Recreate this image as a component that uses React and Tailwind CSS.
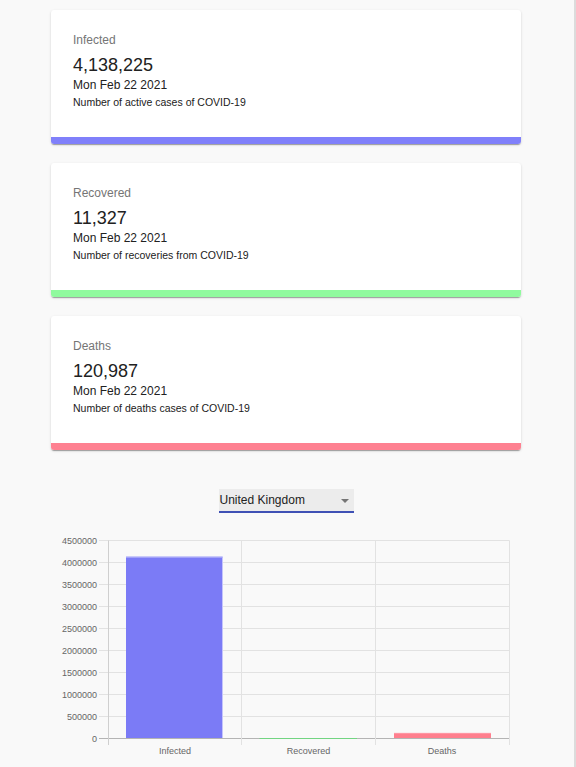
import React from "react";

const cards = [
  { title: "Infected", value: "4,138,225", desc: "Number of active cases of COVID-19", bar: "bg-[#8080fa]" },
  { title: "Recovered", value: "11,327", desc: "Number of recoveries from COVID-19", bar: "bg-[#90fa9e]" },
  { title: "Deaths", value: "120,987", desc: "Number of deaths cases of COVID-19", bar: "bg-[#fe8191]" },
];

function Card({ c }) {
  return (
    <div className="h-[134px] flex flex-col rounded-[3px] overflow-hidden bg-white shadow-[0_2px_1px_-1px_rgba(0,0,0,0.2),0_1px_1px_0_rgba(0,0,0,0.14),0_1px_3px_0_rgba(0,0,0,0.12)]">
      <div className="flex-1 pl-[22px] pt-[21px]">
        <div className="text-[12px] leading-[18px] text-[#757575] mb-[5px]">{c.title}</div>
        <div className="text-[18px] leading-[22px] text-[#212121]">{c.value}</div>
        <div className="text-[12px] leading-[18px] text-[#212121]">Mon Feb 22 2021</div>
        <div className="text-[10.5px] leading-[15px] mt-[1px] text-[#212121]">{c.desc}</div>
      </div>
      <div className={"h-[7px] " + c.bar} />
    </div>
  );
}

function Chart() {
  const ys = [738.5, 716.5, 694.5, 672.5, 650.5, 628.5, 606.5, 584.5, 562.5, 540.5];
  const labels = ["0", "500000", "1000000", "1500000", "2000000", "2500000", "3000000", "3500000", "4000000", "4500000"];
  const xs = [108.5, 241.5, 375.5, 509.5];
  const cats = [
    { name: "Infected", x: 175 },
    { name: "Recovered", x: 308.5 },
    { name: "Deaths", x: 442 },
  ];
  return (
    <svg width="480" height="239" viewBox="40 528 480 239" className="block" style={{ fontFamily: '"Liberation Sans", Arial, sans-serif' }}>
      {ys.map((y, i) => (
        <line key={"h" + i} x1={99} x2={509.5} y1={y} y2={y} stroke={i === 0 ? "#b4b4b4" : "#e2e2e2"} strokeWidth="1" />
      ))}
      {xs.map((x, i) => (
        <line key={"v" + i} x1={x} x2={x} y1={540.5} y2={745} stroke={i === 0 ? "#cfcfcf" : "#e2e2e2"} strokeWidth="1" />
      ))}
      {ys.map((y, i) => (
        <text key={"t" + i} x={97} y={y + 3} textAnchor="end" fontSize="9" fill="#666">{labels[i]}</text>
      ))}
      {cats.map((c) => (
        <text key={c.name} x={c.x} y={753.5} textAnchor="middle" fontSize="9" fill="#666">{c.name}</text>
      ))}
      <rect x="126" y="556.7" width="96.5" height="181.3" fill="#7b7bf6" />
      <line x1="222.5" x2="222.5" y1="557" y2="738" stroke="#c4c4fb" strokeWidth="1" />
      <line x1="126" x2="223" y1="557.2" y2="557.2" stroke="#b4b4fa" strokeWidth="1" />
      <line x1="259.5" x2="357" y1="738.5" y2="738.5" stroke="#72d582" strokeWidth="1" />
      <rect x="394" y="733" width="97" height="5" fill="#ff7f8e" />
      <line x1="394" x2="491" y1="733.3" y2="733.3" stroke="#ffa4ae" strokeWidth="0.8" />
    </svg>
  );
}

export default function App() {
  return (
    <div className="flex h-[767px] bg-[#f9f9f9] overflow-hidden" style={{ fontFamily: '"Liberation Sans", Arial, sans-serif' }}>
      <div className="w-[572px] flex flex-col">
        <div className="w-[470px] mx-auto mt-[10px] flex flex-col gap-[19px]">
          {cards.map((c) => (
            <Card key={c.title} c={c} />
          ))}
        </div>
        <div className="mt-[39px] mx-auto w-[135px] h-[24px] bg-[#ececec] border-b-[2px] border-[#3f51b5] flex items-center justify-between pl-[1px] pr-[5px]">
          <span className="text-[12px] leading-[14px] text-[#222]">United Kingdom</span>
          <svg width="8" height="4" viewBox="0 0 8 4" className="block mt-[1px]">
            <path d="M0 0L4 4L8 0Z" fill="#757575" />
          </svg>
        </div>
        <div className="mt-[15px] ml-[40px]">
          <Chart />
        </div>
      </div>
      <div className="ml-[2px] w-[2px] bg-[#dcdcdc]" />
    </div>
  );
}
